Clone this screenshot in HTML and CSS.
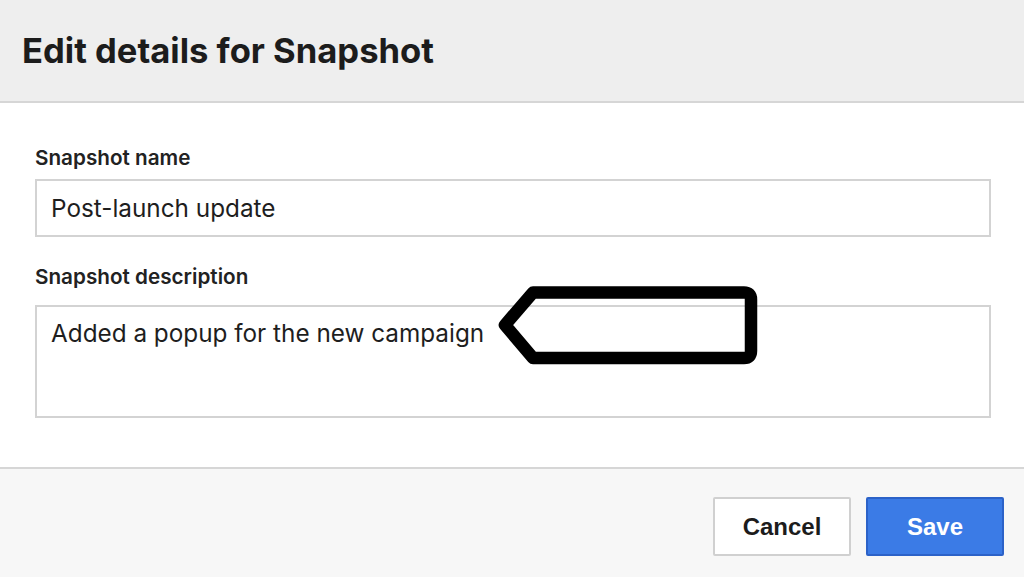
FILE: index.html
```html
<!DOCTYPE html>
<html lang="en">
<head>
<meta charset="utf-8">
<title>Edit details for Snapshot</title>
<link rel="stylesheet" href="styles.css">
</head>
<body>
<div class="dialog">
  <header class="dialog-header">
    <h1 class="dialog-title">Edit details for Snapshot</h1>
  </header>
  <main class="dialog-body">
    <div class="field field-name">
      <label class="field-label" for="snap-name">Snapshot name</label>
      <div class="input">Post-launch update</div>
    </div>
    <div class="field field-desc">
      <label class="field-label" for="snap-desc">Snapshot description</label>
      <div class="textarea">Added a popup for the new campaign</div>
      <svg class="callout" width="272" height="90" viewBox="0 0 272 90" aria-hidden="true">
        <path d="M40 10.5 H251 Q258 10.5 258 17.5 V69 Q258 76 251 76 H40 L12 43 Z" fill="none" stroke="#000" stroke-width="12.5" stroke-linejoin="round"/>
      </svg>
    </div>
  </main>
  <footer class="dialog-footer">
    <button class="btn btn-cancel" type="button">Cancel</button>
    <button class="btn btn-save" type="button">Save</button>
  </footer>
</div>
</body>
</html>
```
FILE: styles.css
```css
html, body {
  margin: 0;
  padding: 0;
  background: #ffffff;
}
body {
  font-family: Inter, "Noto Sans", sans-serif;
  color: #1f1f1f;
}
.dialog {
  width: 1024px;
  height: 577px;
  display: flex;
  flex-direction: column;
  overflow: hidden;
}
.dialog-header {
  height: 101px;
  background: #eeeeee;
  border-bottom: 2px solid #d6d6d6;
  display: flex;
  align-items: center;
  padding: 0 22px;
  box-sizing: content-box;
  flex: none;
}
.dialog-title {
  margin: 0;
  font-size: 34.6px;
  font-weight: 700;
  color: #1c1c1c;
  line-height: 1;
  padding-bottom: 1px;
}
.dialog-body {
  flex: 1;
  padding: 43px 33px 0 35px;
  display: flex;
  flex-direction: column;
  gap: 28px;
}
.field {
  display: flex;
  flex-direction: column;
}
.field-desc {
  position: relative;
}
.field-label {
  font-size: 20.7px;
  font-weight: 600;
  color: #222222;
  line-height: 24px;
}
.field-name .field-label {
  margin-bottom: 9px;
}
.field-desc .field-label {
  margin-bottom: 16px;
}
.input, .textarea {
  border: 2px solid #d3d3d3;
  background: #ffffff;
  font-size: 24.3px;
  color: #1e1e1e;
  padding: 0 14px;
  box-sizing: border-box;
}
.input {
  height: 58px;
  line-height: 54px;
}
.textarea {
  height: 113px;
  padding-top: 12px;
  line-height: 28px;
}
.callout {
  position: absolute;
  left: 458px;
  top: 17px;
}
.dialog-footer {
  flex: none;
  height: 110px;
  background: #f7f7f7;
  border-top: 2px solid #d6d6d6;
  display: flex;
  justify-content: flex-end;
  align-items: flex-start;
  gap: 15px;
  padding: 28px 20px 0 0;
  box-sizing: border-box;
}
.btn {
  width: 138px;
  height: 59px;
  font-family: "Liberation Sans", Arial, sans-serif;
  font-size: 24px;
  font-weight: 700;
  border-radius: 2px;
  cursor: pointer;
}
.btn-cancel {
  background: #ffffff;
  border: 2px solid #d0d0d0;
  color: #1c1c1c;
}
.btn-save {
  background: #3b7be6;
  border: 2px solid #2c62c8;
  color: #ffffff;
}
```
